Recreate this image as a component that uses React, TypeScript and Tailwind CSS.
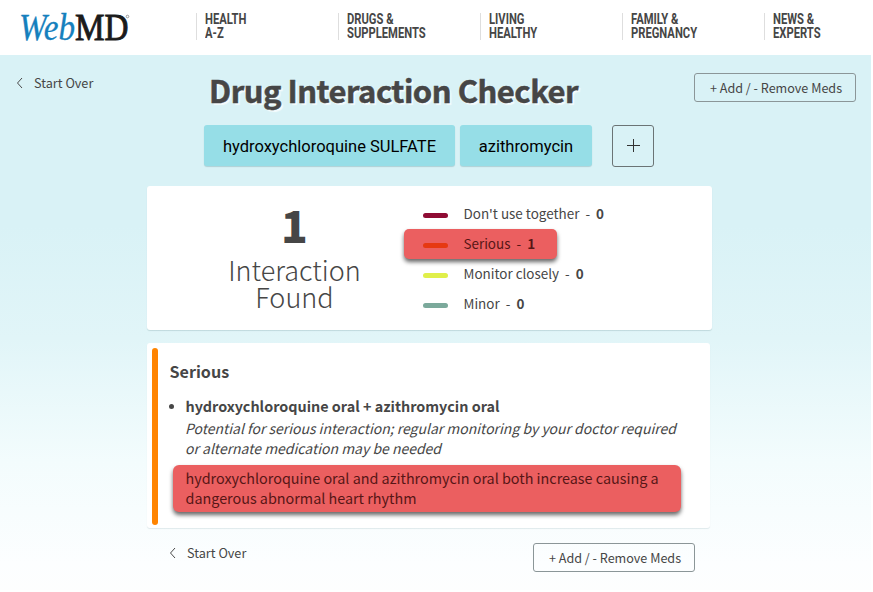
import type { ReactNode } from "react";

const navItems = [
  ["HEALTH", "A-Z"],
  ["DRUGS &", "SUPPLEMENTS"],
  ["LIVING", "HEALTHY"],
  ["FAMILY &", "PREGNANCY"],
  ["NEWS &", "EXPERTS"],
];

const severities = [
  { label: "Don't use together", count: 0, bar: "bg-[#8f0c34]", active: false },
  { label: "Serious", count: 1, bar: "bg-[#e63912]", active: true },
  { label: "Monitor closely", count: 0, bar: "bg-[#e0ef4a]", active: false },
  { label: "Minor", count: 0, bar: "bg-[#7ba99b]", active: false },
];

function Logo() {
  return (
    <svg width="110" height="38" viewBox="0 -6 110 38" className="-mt-[6px] block overflow-visible" aria-label="WebMD">
      <text x="-2" y="27.5" fontFamily="'Liberation Serif', serif" fontStyle="italic" fontSize="37.5" fill="#1580bd" stroke="#1580bd" strokeWidth="0.3" textLength="56" lengthAdjust="spacingAndGlyphs">Web</text>
      <text x="54" y="27.5" fontFamily="'Liberation Serif', serif" fontSize="37" fill="#1b1b1b" stroke="#1b1b1b" strokeWidth="0.9" textLength="53.5" lengthAdjust="spacingAndGlyphs">MD</text>
      <circle cx="106.5" cy="4.5" r="1.3" fill="none" stroke="#666" strokeWidth="0.6" />
    </svg>
  );
}

function StartOver() {
  return (
    <div className="flex h-5 items-center">
      <svg width="7" height="12" viewBox="0 0 7 12" fill="none" stroke="#4a4a4a" strokeWidth="1">
        <path d="M6 1 L1.5 6 L6 11" />
      </svg>
      <span className="ml-[11px] text-[12.7px] leading-5">Start Over</span>
    </div>
  );
}

function MedsButton() {
  return (
    <button className="h-[29px] w-[162px] rounded-[3px] border border-[#8b9698] pl-[2px] text-[12.6px] leading-[28px] whitespace-nowrap">
      + Add / - Remove Meds
    </button>
  );
}

function Chip({ children, width }: { children: ReactNode; width: string }) {
  return (
    <div className={`h-[41px] ${width} rounded-[3px] bg-[#96dee7] text-center font-['Roboto',sans-serif] text-[16.5px] leading-[44px] text-black shadow-[0_1px_1px_rgba(0,80,90,0.2)]`}>
      {children}
    </div>
  );
}

export default function App() {
  return (
    <div className="h-[592px] w-[873px] overflow-hidden bg-white font-['Noto_Sans_CJK_SC','Noto_Sans',sans-serif] text-[#464646]">
      <header className="flex h-[55px] pt-[12px] pl-[21px]">
        <div className="w-[175px] shrink-0">
          <Logo />
        </div>
        {navItems.map(([a, b]) => (
          <div key={a} className="mt-[1px] h-[27px] w-[142px] shrink-0 border-l border-[#dedede] pl-2">
            <div className="origin-left scale-x-[0.79] font-['Roboto',sans-serif] text-[14.2px] leading-[13.5px] font-bold">
              {a}
              <br />
              {b}
            </div>
          </div>
        ))}
      </header>

      <main className="h-[535px] w-[871px] bg-[linear-gradient(180deg,#d9f2f6_0%,#d9f2f6_32%,#e1f5f8_53%,#f3fcfd_76%,#fcfeff_95%,#fdfefe_100%)]">
        <div className="flex h-[70px] justify-between pr-[15px] pl-4">
          <div className="w-[193px] pt-[18px]">
            <StartOver />
          </div>
          <h1 className="flex-1 pt-[11px] text-[31px] leading-[48px] font-bold tracking-[-0.5px] whitespace-nowrap [-webkit-text-stroke:0.5px_#464646] [text-shadow:2px_2px_1px_#f5fbfc]">
            Drug Interaction Checker
          </h1>
          <div className="pt-[18px]">
            <MedsButton />
          </div>
        </div>

        <div className="flex pl-[204px]">
          <Chip width="w-[251px]">hydroxychloroquine SULFATE</Chip>
          <div className="w-[5px]" />
          <Chip width="w-[132px]">azithromycin</Chip>
          <button className="ml-5 flex h-[42px] w-[42px] items-center justify-center rounded-[3px] border border-[#6b7475] pb-[2px]">
            <svg width="13" height="13" viewBox="0 0 13 13" stroke="#333" strokeWidth="1">
              <path d="M6.5 0v13M0 6.5h13" />
            </svg>
          </button>
        </div>

        <section className="mt-[19px] ml-[147px] flex h-[144px] w-[565px] rounded-[3px] bg-white shadow-[0_1px_1px_rgba(0,60,70,0.15)]">
          <div className="w-[257px] pt-[15px] pl-[38px] text-center">
            <div className="text-[44px] leading-[46px] font-black">1</div>
            <div className="pt-[9px] text-[27px] leading-[27px] font-light">
              Interaction
              <br />
              Found
            </div>
          </div>
          <ul className="pt-[13px]">
            {severities.map((s) => (
              <li
                key={s.label}
                className={
                  s.active
                    ? "flex h-[30px] w-[153px] items-center rounded-[5px] bg-[#eb5f60] pl-[19px] text-[#571616] shadow-[0_3px_4px_rgba(0,0,0,0.6)]"
                    : "flex h-[30px] w-[260px] items-center pl-[19px]"
                }
              >
                <span className={`mt-[3px] h-[5px] w-[25px] rounded-full ${s.bar}`} />
                <span className="ml-[15.5px] pb-[3px] text-[13.45px] leading-[20px] whitespace-pre">
                  {s.label}
                  {"  -  "}
                  <b>{s.count}</b>
                </span>
              </li>
            ))}
          </ul>
        </section>

        <section className="mt-[13px] ml-[147px] flex h-[185px] w-[563px] rounded-[3px] bg-white pt-[5px] pl-[5px] shadow-[0_1px_1px_rgba(0,60,70,0.1)]">
          <div className="h-[177px] w-[6px] rounded-full bg-[#ff8400]" />
          <div className="pt-[12px] pl-[11px]">
            <h2 className="pl-[0.5px] text-[16.1px] leading-[22px] font-bold">Serious</h2>
            <div className="mt-[12px] flex">
              <div className="mt-[10px] h-[5px] w-[5px] rounded-full bg-[#464646]" />
              <div className="pl-[11.5px] text-[13.97px] leading-[20px]">
                <div className="text-[14.38px] leading-[23px] font-bold whitespace-nowrap">hydroxychloroquine oral + azithromycin oral</div>
                <div className="pt-[1px] -ml-[0.5px] whitespace-nowrap italic">
                  Potential for serious interaction; regular monitoring by your doctor required
                  <br />
                  or alternate medication may be needed
                </div>
                <div className="mt-[7px] -ml-[12.5px] h-[47px] w-[508px] rounded-[6px] bg-[#eb5f60] pt-[3px] pl-[12.5px] text-[14.37px] whitespace-nowrap text-[#571616] shadow-[0_3px_4px_rgba(0,0,0,0.6)]">
                  hydroxychloroquine oral and azithromycin oral both increase causing a
                  <br />
                  dangerous abnormal heart rhythm
                </div>
              </div>
            </div>
          </div>
        </section>

        <div className="flex justify-between pr-[176px] pl-[169px]">
          <div className="pt-[15px]">
            <StartOver />
          </div>
          <div className="pt-[15px]">
            <MedsButton />
          </div>
        </div>
      </main>
    </div>
  );
}
